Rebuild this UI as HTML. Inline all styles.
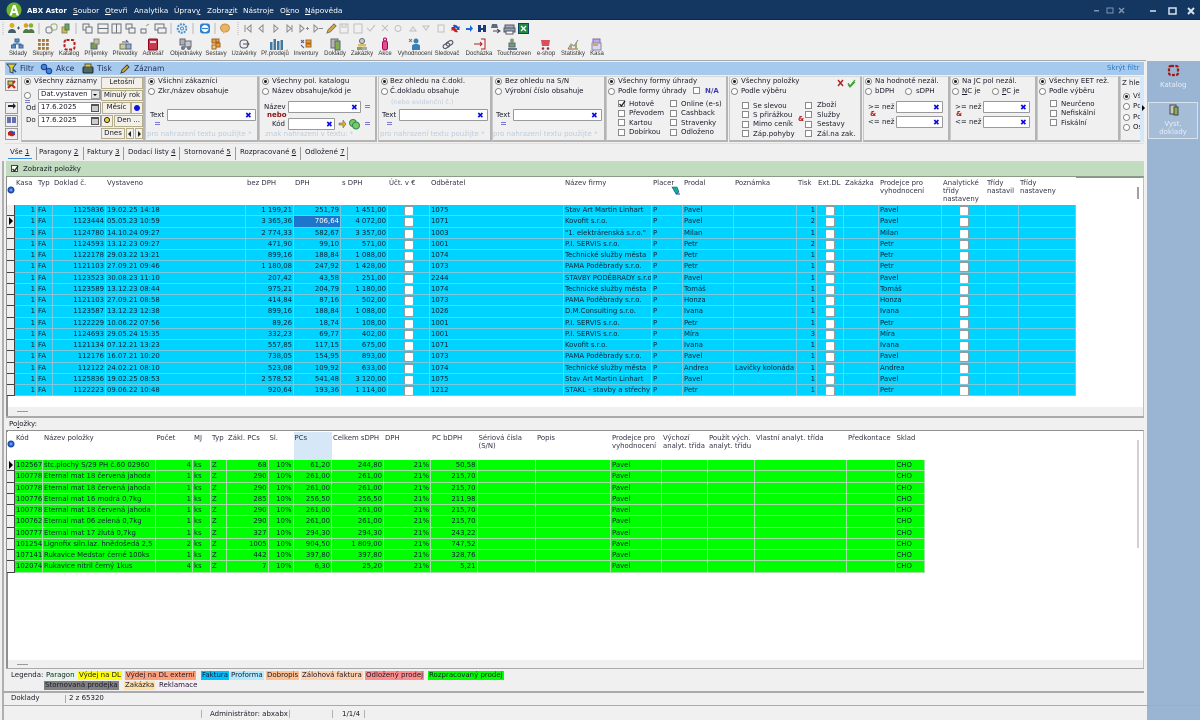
<!DOCTYPE html>
<html lang="cs"><head><meta charset="utf-8"><title>ABX Astor</title>
<style>
*{box-sizing:border-box}
html,body{margin:0;padding:0;width:1200px;height:720px;overflow:hidden;background:#f0f0f0}
body{position:relative;font:7px/9px "DejaVu Sans","Liberation Sans",sans-serif;color:#1a1a2a;filter:blur(.3px)}
.a,.t,.p,.inp,.btn,.rd,.ck,.x,.eq,.hn{position:absolute}
.t{white-space:nowrap}
.l{position:absolute;white-space:nowrap;transform:translateX(-50%);top:50px;font:6px/9px "Liberation Sans",sans-serif;color:#333}
.m{position:absolute;top:6px;color:#fff;font-size:7.4px;line-height:10px;white-space:nowrap}
.p{top:76px;height:66px;border:1px solid #b4b4b4;border-top-color:#d8d8d8;border-left-color:#c8c8c8;border-right-width:2px;border-bottom-width:2px;background:#f0f0f0}
.inp{background:#fff;border:1px solid #9a9a9a;border-radius:1px;padding:0 2px;line-height:9px;white-space:nowrap;overflow:hidden}
.btn{background:#f2f0e8;border:1px solid #b4ad8c;text-align:center;line-height:9px;white-space:nowrap;overflow:hidden}
.rd{width:7px;height:7px;border-radius:50%;background:#fff;border:1px solid #8a8a8a}
.rd.on:after{content:"";position:absolute;left:1px;top:1px;width:3px;height:3px;border-radius:50%;background:#222}
.ck{width:7px;height:7px;background:#fff;border:1px solid #8a8a8a}
.x{color:#0a0ae0;font:bold 8px/9px "DejaVu Sans",sans-serif}
.eq{width:5px;height:3px;border-top:1px solid #7a7ad0;border-bottom:1px solid #7a7ad0}
.hn{color:#bcccdc;white-space:nowrap;top:130px}
u{text-decoration:underline}
.tb{position:absolute;top:148px;white-space:nowrap;font-size:7px}
.sp{position:absolute;top:147px;width:1px;height:13px;background:#9a9a9a}
.g{position:absolute;left:7px;font-size:6.9px;line-height:11px;color:#0a2230}
.r{display:grid;height:11.25px;overflow:hidden}
.r>i{font-style:normal;white-space:nowrap;overflow:hidden;padding:0 1px;border-right:1px solid var(--b);border-bottom:1px solid var(--b);line-height:10px;position:relative}
.r>i:first-child{background:#f0f0f0;border-right:1px solid #444;border-bottom:1px solid #444}
.r>i.c:after{content:"";position:absolute;left:50%;top:1px;width:8px;height:8px;margin-left:-5px;background:#fff;border:1px solid #9a9a9a;border-radius:2px}
.r>i.sel{background:#1b76cc;color:#fff}
.r>i.mk:after{content:"";position:absolute;left:2px;top:1px;border-left:4px solid #000;border-top:4px solid transparent;border-bottom:4px solid transparent}
.h{display:grid;height:28px;background:#fff;color:#334}
.h>i{font-style:normal;padding:2px 1px 0 1px;white-space:nowrap;line-height:8px;overflow:hidden}
#top .r,#top .h{grid-template-columns:8px 22px 16px 53px 140px 48px 47px 47px 42px 134px 88px 31px 51px 63px 20px 27px 35px 63px 44px 33px 57px}
#top .r{background:#00d3ff;--b:#7cc8dc}
#bot .r,#bot .h{grid-template-columns:8px 28px 112.5px 37.5px 18px 16px 41.5px 25px 38.5px 52px 47px 46.5px 58.5px 75px 51px 46px 47px 92px 48.5px 29.5px}
#bot .r{background:#00ff00;--b:#a4dea4}
#top .r>i:nth-child(2),#top .r>i:nth-child(4),#top .r>i:nth-child(6),#top .r>i:nth-child(7),#top .r>i:nth-child(8),#top .r>i:nth-child(15){text-align:right}
#bot .r>i:nth-child(2),#bot .r>i:nth-child(4),#bot .r>i:nth-child(7),#bot .r>i:nth-child(8),#bot .r>i:nth-child(9),#bot .r>i:nth-child(10),#bot .r>i:nth-child(11),#bot .r>i:nth-child(12){text-align:right}
.lg{position:absolute;white-space:nowrap;height:9px;line-height:9px;padding:0 1px;font-size:7px}
</style></head><body>

<!-- title bar -->
<div class="a" style="left:0;top:0;width:1200px;height:20px;background:#133761;border-bottom:1px solid #0d2a4a"></div>
<svg class="a" style="left:0;top:0" width="1200" height="62">
<circle cx="14" cy="10" r="7.5" fill="#6fb52c"/><path d="M9.5 15.5L13 5h2.5l3.5 10.500h-2.500l-.7-2.500h-3.300l-.7 2.500zM12.800 11h2.200L14 7.500z" fill="#fff"/>
<g fill="#7f93ad"><rect x="1094" y="10" width="5" height="1.500"/><rect x="1107" y="8" width="6" height="5" fill="none" stroke="#7f93ad"/><path d="M1119 8l5 5M1124 8l-5 5" stroke="#7f93ad" stroke-width="1.500"/></g>
<g stroke="#d8e2ee" fill="none" stroke-width="1.500"><path d="M1150 11h6"/><rect x="1169" y="8" width="7" height="6"/><path d="M1188 8l6 6M1194 8l-6 6" stroke-width="2"/></g>

<!-- row 1 separators -->
<g stroke="#b8b8b8"><path d="M39 23v11M76 23v11M171 23v11M193 23v11M215 23v11"/><path d="M238 22v13" stroke-dasharray="1 1"/><path d="M3 22v13" stroke-dasharray="1 1"/></g>
<!-- users -->
<circle cx="12" cy="25.500" r="2.500" fill="#d8b020"/><path d="M8 33c0-3 2-4 4-4s4 1 4 4z" fill="#46606a"/><path d="M17 28h3M18.500 26.500v3" stroke="#556"/>
<circle cx="26" cy="25.500" r="2.300" fill="#d8a020"/><circle cx="31" cy="25.500" r="2.300" fill="#8cb030"/><path d="M23 33c0-3 2-4 3.500-4s3 1 3 4zM28 33c0-3 1.500-4 3-4s3.500 1 3.500 4z" fill="#4f7a48"/>
<!-- chains -->
<rect x="46" y="27" width="6" height="6" rx="2" fill="none" stroke="#6a7a7a"/><rect x="51" y="24" width="6" height="6" rx="2" fill="none" stroke="#90a870"/>
<rect x="62" y="27" width="5" height="6" fill="#d8c030" stroke="#887"/><rect x="65" y="24" width="4" height="6" fill="#70a850" stroke="#576"/>
<!-- windows -->
<g fill="none" stroke="#6a7078"><rect x="83" y="24" width="6" height="6"/><rect x="86" y="27" width="6" height="6" fill="#f0f0f0"/><rect x="98" y="24" width="10" height="9"/><path d="M98 28.500h10"/><rect x="112" y="24" width="9" height="9"/><path d="M116.500 24v9"/><rect x="126" y="24" width="6" height="5"/><rect x="129" y="28" width="6" height="5" fill="#f0f0f0"/><rect x="141" y="29" width="5" height="4"/><path d="M146 26l3-2" stroke="#7a6"/><rect x="155" y="24" width="9" height="6"/><rect x="158" y="28" width="8" height="5" fill="#f0f0f0"/></g>
<!-- gear -->
<circle cx="182" cy="28.500" r="4.300" fill="none" stroke="#4d94cf" stroke-width="2" stroke-dasharray="2 1"/><circle cx="182" cy="28.500" r="1.500" fill="none" stroke="#4d94cf"/>
<!-- teamviewer -->
<rect x="200" y="23.500" width="10" height="10" rx="2.500" fill="#2b80d0"/><ellipse cx="205" cy="28.500" rx="3.500" ry="3.500" fill="#fff"/><path d="M202 28.500h6" stroke="#2b80d0" stroke-width="1.200"/>
<!-- bubble -->
<ellipse cx="225" cy="28" rx="4.500" ry="4" fill="#e8b46a" stroke="#c89040"/><path d="M223 31v3l3-2.500" fill="#e8b46a"/>
<!-- nav -->
<g fill="none" stroke="#8a8a8a"><path d="M245 25v7M251 25l-4 3.500 4 3.500z"/><path d="M263 25l-4 3.500 4 3.500z"/><path d="M274 25l4 3.500-4 3.500z"/><path d="M287 25l4 3.500-4 3.500zM292 25v7"/><path d="M300 25l4 3.500-4 3.500zM306 28.500h3M307.500 27v3" /><path d="M314 25l4 3.500-4 3.500zM319 28.500h4"/></g>
<path d="M327 33l1-3 6-6 2 2-6 6z" fill="#e8b030" stroke="#776"/>
<g fill="none" stroke="#c0c0c0"><rect x="340" y="24" width="8" height="9"/><path d="M342 24v3h4v-3"/><rect x="354" y="24" width="8" height="9"/><path d="M367 28l3 3 5-6"/><path d="M382 25l6 6M388 25l-6 6"/><path d="M395 28.500a3 3 0 1 0 6 0a3 3 0 1 0-6 0"/><path d="M410 31l3-4 3 4z"/><path d="M423 26l3 4 3-4z"/><rect x="438" y="25" width="6" height="7"/></g>
<path d="M453 25a4 4 0 0 1 5 2l1.500-1v4h-4l1.500-1a2 2 0 0 0-3-1z" fill="#1558d0"/><path d="M458 32a4 4 0 0 1-5-2l-1.500 1v-4h3" fill="#c02020"/>
<path d="M466 28h4v-3l3 3.500-3 3.500v-2h-4z" fill="#1a6ad8"/>
<path d="M478 25h3v7h-3zM483 25h3v7h-3zM481 28h2v2h-2z" fill="#1a3a80"/>
<path d="M492 24h5l1 4h-7z" fill="#5a6a80"/><path d="M493 31h6M497 29l3 2-3 2" stroke="#445" fill="none"/>
<rect x="505" y="25" width="9" height="4" fill="#aab" stroke="#556"/><rect x="504" y="28" width="11" height="4" fill="#8fa4b8" stroke="#556"/><rect x="506" y="31" width="7" height="3" fill="#fff" stroke="#556"/>
<rect x="518.500" y="23.500" width="10" height="10" fill="#1f8a3e" stroke="#146"/><path d="M521 26l5 5M526 26l-5 5" stroke="#fff" stroke-width="1.300"/>

<!-- row 2 icons -->
<g stroke="#3a6aa0" fill="#5e8dc0"><rect x="15" y="39" width="4" height="3"/><rect x="11.500" y="45" width="4" height="3"/><rect x="19" y="45" width="4" height="3"/><path d="M17 42v2M13.500 45v-1h7.500v1" fill="none"/></g>
<g fill="#a07840"><rect x="38" y="39" width="2.800" height="2.800"/><rect x="42" y="39" width="2.800" height="2.800"/><rect x="46" y="39" width="2.800" height="2.800"/><rect x="38" y="43" width="2.800" height="2.800"/><rect x="42" y="43" width="2.800" height="2.800"/><rect x="46" y="43" width="2.800" height="2.800"/><rect x="38" y="47" width="2.800" height="2.800"/><rect x="42" y="47" width="2.800" height="2.800"/><rect x="46" y="47" width="2.800" height="2.800"/></g>
<rect x="64.500" y="40" width="10" height="9.500" rx="2" fill="none" stroke="#b02020" stroke-width="2" stroke-dasharray="3 1.500"/>
<rect x="91" y="43" width="6" height="6" fill="#7a9a50" stroke="#567"/><rect x="94" y="39" width="5" height="5" fill="#c0c0a0" stroke="#887"/>
<rect x="120" y="44" width="6" height="5" fill="#cc9" stroke="#775"/><rect x="126" y="44" width="5" height="5" fill="#9ad" stroke="#567"/><path d="M122 42h6l-2-2" fill="none" stroke="#557"/>
<rect x="148.500" y="39" width="9" height="11" rx="1" fill="#c83a4a" stroke="#802"/><rect x="150" y="41" width="6" height="2" fill="#f0d0d0"/>
<rect x="180" y="39" width="5" height="6" fill="#a8b0b8" stroke="#667"/><rect x="185" y="41" width="6" height="6" fill="#c8c8c8" stroke="#667"/><circle cx="183" cy="48" r="2" fill="#778"/><circle cx="189" cy="48" r="2" fill="#778"/>
<g stroke="#a06020" fill="#e8a030"><rect x="212" y="39" width="4" height="4"/><rect x="216" y="43" width="4" height="4"/><rect x="212" y="45" width="4" height="4" fill="#f0d080"/><rect x="216" y="39" width="3" height="3" fill="#d0b080"/></g>
<rect x="240" y="40" width="8" height="8" rx="3" fill="none" stroke="#556"/><path d="M243 44h6M247 42l2 2-2 2" fill="none" stroke="#556"/>
<g fill="#44799f"><rect x="270" y="42" width="2.500" height="8"/><rect x="273.500" y="39" width="2.500" height="11"/><rect x="277" y="41" width="2.500" height="9"/><rect x="280.500" y="40" width="2.500" height="10"/></g>
<rect x="306" y="40" width="5" height="3" fill="#e8a030" stroke="#a62"/><rect x="306" y="44" width="5" height="3" fill="#e8a030" stroke="#a62"/><path d="M301 40l3 3M304 40l-3 3M301 45l3 3" stroke="#557"/>
<rect x="331" y="39" width="7" height="9" fill="#b8b8a8" stroke="#667"/><rect x="335" y="41" width="5" height="9" fill="#88aa50" stroke="#567"/>
<circle cx="362" cy="41" r="2.500" fill="#c0c8d0" stroke="#667"/><rect x="358" y="44" width="8" height="2.500" fill="#d8c060"/><rect x="357" y="47" width="5" height="3" fill="#88a060"/><rect x="362" y="47" width="5" height="3" fill="#a8a8b0"/>
<rect x="382.500" y="41" width="5" height="9" rx="2" fill="#e05090" stroke="#a05"/><circle cx="385" cy="39.500" r="1.500" fill="none" stroke="#a05"/>
<circle cx="416" cy="41" r="2.500" fill="#3a80b0"/><path d="M412 50v-4c0-1.500 2-2 4-2s4 .5 4 2v4z" fill="#3a80b0"/><path d="M409 39l3 3M412 39l-3 3" stroke="#777"/>
<g fill="none" stroke="#556" stroke-width="1.200"><rect x="443" y="44" width="7" height="4" rx="2" transform="rotate(-30 446 46)"/><rect x="446" y="41" width="7" height="4" rx="2" transform="rotate(-30 450 43)"/></g>
<path d="M481 39h4v10h-4" fill="none" stroke="#b02020"/><path d="M474 44h8M480 42l2 2-2 2" fill="none" stroke="#b02020"/>
<circle cx="512" cy="40.500" r="2" fill="#8a9a70"/><rect x="509" y="43" width="6" height="4" fill="#7a9a70" stroke="#567"/><path d="M508 49h9" stroke="#678" stroke-width="2"/>
<path d="M541 40h9l-1 6h-7z" fill="#d85060"/><circle cx="543" cy="48.500" r="1.300" fill="#a03040"/><circle cx="548" cy="48.500" r="1.300" fill="#a03040"/>
<path d="M568 49l3-5 3 2 4-6" fill="none" stroke="#8a8a8a"/><path d="M568 49h10" stroke="#a06040"/><rect x="570" y="44" width="2" height="5" fill="#a8a870"/><rect x="575" y="43" width="2" height="6" fill="#a8a870"/>
<rect x="593" y="39" width="7" height="4" fill="#b8b0e0" stroke="#86a"/><rect x="592" y="43" width="9" height="7" fill="#d8d8f0" stroke="#88a"/><rect x="593" y="44" width="5" height="2" fill="#e0a060"/>

<path d="M0 60.500h1146" stroke="#a8a8a8"/>
</svg>
<span class="t" style="left:27px;top:6px;color:#fff;font:bold 7px/10px 'DejaVu Sans',sans-serif">ABX Astor</span>
<span class="m" style="left:73px"><u>S</u>oubor</span><span class="m" style="left:105px"><u>O</u>tevři</span><span class="m" style="left:134px">Analytika</span><span class="m" style="left:174px">Úprav<u>y</u></span><span class="m" style="left:207px">Zobra<u>z</u>it</span><span class="m" style="left:243px">Nástroje</span><span class="m" style="left:280px">O<u>k</u>no</span><span class="m" style="left:305px"><u>N</u>ápověda</span>

<span class="l" style="left:18px">Sklady</span><span class="l" style="left:43px">Skupiny</span><span class="l" style="left:69px">Katalog</span><span class="l" style="left:96px">Příjemky</span><span class="l" style="left:125px">Převodky</span><span class="l" style="left:153px">Adresář</span><span class="l" style="left:186px">Objednávky</span><span class="l" style="left:216px">Sestavy</span><span class="l" style="left:244px">Uzávěrky</span><span class="l" style="left:275px">Př.prodejů</span><span class="l" style="left:306px">Inventury</span><span class="l" style="left:335px">Doklady</span><span class="l" style="left:362px">Zakázky</span><span class="l" style="left:385px">Akce</span><span class="l" style="left:415px">Vyhodnocení</span><span class="l" style="left:447px">Sledovač</span><span class="l" style="left:479px">Docházka</span><span class="l" style="left:514px">Touchscreen</span><span class="l" style="left:546px">e-shop</span><span class="l" style="left:573px">Statistiky</span><span class="l" style="left:597px">Kasa</span>

<!-- right panel -->
<div class="a" style="left:1147px;top:61px;width:53px;height:659px;background:#9ab5d3"></div>
<div class="a" style="left:1148px;top:102px;width:50px;height:37px;background:#a6bdd8;border:1px solid #d8e2ec"></div>
<svg class="a" style="left:1147px;top:62px" width="53" height="60">
<rect x="22" y="4" width="9" height="9" rx="2" fill="none" stroke="#a01818" stroke-width="2.200" stroke-dasharray="3 1.300"/>
<rect x="23" y="43" width="6" height="9" fill="#c8c8b8" stroke="#445"/><rect x="27" y="45" width="4" height="8" fill="#88b040" stroke="#445"/>
</svg>
<span class="t" style="left:1160px;top:81px;color:#e8eef5;font-size:7px">Katalog</span>
<span class="t" style="left:1148px;top:120px;width:50px;color:#e8eef5;font-size:7px;text-align:center;line-height:8px;white-space:normal">Vyst.<br>doklady</span>

<!-- filter bar -->
<div class="a" style="left:5px;top:62px;width:1139px;height:13px;background:#a6c9ee"></div>
<svg class="a" style="left:0;top:62px" width="150" height="14">
<path d="M7 2h9l-3 4v5l-3-1V6z" fill="#e8d020" stroke="#2a4a8a"/><path d="M13 7l3 3" stroke="#2a4a8a" stroke-width="1.500"/>
<circle cx="44" cy="5" r="2.800" fill="#3a88d8" stroke="#1a3a90"/><circle cx="49" cy="9" r="2.800" fill="#3a88d8" stroke="#1a3a90"/>
<rect x="83" y="5" width="10" height="6" rx="1" fill="#4a6a60" stroke="#223"/><rect x="85" y="2" width="6" height="3" fill="#d8c850" stroke="#553"/>
<path d="M121 11l1-3 5-5 2 2-5 5z" fill="#e0b030" stroke="#444"/>
</svg>
<span class="t" style="left:20px;top:64px;font-size:7.5px;color:#203060">Filtr</span><span class="t" style="left:56px;top:64px;font-size:7.5px;color:#203060">Akce</span><span class="t" style="left:97px;top:64px;font-size:7.5px;color:#203060">Tisk</span><span class="t" style="left:134px;top:64px;font-size:7.5px;color:#203060">Záznam</span>
<span class="t" style="left:1107px;top:64px;color:#2778c4">Skrýt filtr</span>

<!-- filter left buttons -->
<div class="btn" style="left:5px;top:78px;width:13px;height:13px;background:#efefef;border-color:#999"></div>
<div class="btn" style="left:5px;top:102px;width:13px;height:12px;background:#efefef;border-color:#999"></div>
<div class="btn" style="left:5px;top:115px;width:13px;height:12px;background:#efefef;border-color:#999"></div>
<div class="btn" style="left:5px;top:128px;width:13px;height:12px;background:#efefef;border-color:#999"></div>
<svg class="a" style="left:5px;top:78px" width="13" height="62">
<path d="M3 3l7 7M10 3l-7 7" stroke="#d01818" stroke-width="2"/><rect x="3" y="3" width="5" height="4" fill="#d8c030" stroke="#554"/>
<path d="M3 27h5v-2l3 3-3 3v-2H3z" fill="#223"/><path d="M3 39v6M5 39v6M8 39v6M10 39v6" stroke="#1a2a90" stroke-width="1.300"/>
<path d="M3 55a3.500 3.500 0 0 1 6-1l1-1v4H6l1-1a2 2 0 0 0-3 0z" fill="#1a50c8"/><path d="M10 56a3.500 3.500 0 0 1-6 1l-1 1v-4h4l-1 1a2 2 0 0 0 3 0z" fill="#c02020"/>
</svg>

<!-- panels -->
<div class="p" style="left:21px;width:124px"></div>
<div class="p" style="left:145px;width:114px"></div>
<div class="p" style="left:259px;width:118px"></div>
<div class="p" style="left:378px;width:114px"></div>
<div class="p" style="left:492px;width:114px"></div>
<div class="p" style="left:606px;width:122px"></div>
<div class="p" style="left:729px;width:133px"></div>
<div class="p" style="left:863px;width:87px"></div>
<div class="p" style="left:950px;width:87px"></div>
<div class="p" style="left:1037px;width:83px"></div>
<div class="p" style="left:1120px;width:22px"></div>
<div class="a" style="left:1140px;top:76px;width:4px;height:66px;background:#d3e8fb"></div>

<!-- P0 -->
<i class="rd on" style="left:24px;top:78px"></i><span class="t" style="left:34px;top:77px">Všechny záznamy</span>
<div class="btn" style="left:101px;top:77px;width:42px;height:12px">Letošní</div>
<i class="rd" style="left:24px;top:92px"></i><i class="eq" style="left:25px;top:100px"></i>
<div class="inp" style="left:38px;top:89px;width:63px;height:11px;line-height:9px">Dat.vystaven</div>
<div class="a" style="left:91px;top:90px;width:9px;height:9px;background:#e4e4e4;border:1px solid #999"></div><div class="a" style="left:93px;top:94px;border-left:2px solid transparent;border-right:2px solid transparent;border-top:2px solid #000"></div>
<div class="btn" style="left:101px;top:90px;width:42px;height:11px">Minulý rok</div>
<span class="t" style="left:26px;top:104px">Od</span><div class="inp" style="left:38px;top:102px;width:63px;height:12px">17.6.2025</div><div class="a" style="left:91px;top:104px;width:8px;height:8px;background:#ccc;border:1px solid #555;border-top-width:2px"></div>
<div class="btn" style="left:102px;top:102px;width:29px;height:12px">Měsíc</div><div class="btn" style="left:131px;top:102px;width:12px;height:12px"></div><div class="a" style="left:134px;top:105px;width:6px;height:6px;border-radius:50%;background:#1010e0"></div>
<span class="t" style="left:26px;top:116px">Do</span><div class="inp" style="left:38px;top:115px;width:63px;height:12px">17.6.2025</div><div class="a" style="left:91px;top:117px;width:8px;height:8px;background:#ccc;border:1px solid #555;border-top-width:2px"></div>
<div class="btn" style="left:101px;top:115px;width:12px;height:12px"></div><div class="a" style="left:104px;top:117px;width:6px;height:6px;border-radius:50%;background:#f0d030;border:1px solid #222"></div>
<div class="btn" style="left:114px;top:115px;width:29px;height:12px">Den ...</div>
<div class="btn" style="left:101px;top:128px;width:24px;height:11px">Dnes</div><div class="btn" style="left:126px;top:128px;width:8px;height:11px"></div><div class="btn" style="left:135px;top:128px;width:8px;height:11px"></div>
<div class="a" style="left:128px;top:131px;border-right:3px solid #222;border-top:3px solid transparent;border-bottom:3px solid transparent"></div><div class="a" style="left:138px;top:131px;border-left:3px solid #222;border-top:3px solid transparent;border-bottom:3px solid transparent"></div>

<!-- P1 -->
<i class="rd on" style="left:148px;top:78px"></i><span class="t" style="left:158px;top:77px">Všichni zákazníci</span>
<i class="rd" style="left:148px;top:88px"></i><span class="t" style="left:158px;top:87px">Zkr./název obsahuje</span>
<span class="t" style="left:150px;top:111px">Text</span><i class="eq" style="left:155px;top:122px"></i>
<div class="inp" style="left:167px;top:109px;width:89px;height:12px"></div><b class="x" style="left:245px;top:111px">✖</b>
<span class="hn" style="left:147px;top:130px">pro nahrazení textu použijte *</span>

<!-- P2 -->
<i class="rd on" style="left:262px;top:78px"></i><span class="t" style="left:272px;top:77px">Všechny pol. katalogu</span>
<i class="rd" style="left:262px;top:88px"></i><span class="t" style="left:272px;top:87px">Název obsahuje/kód je</span>
<span class="t" style="left:264px;top:103px">Název</span><div class="inp" style="left:288px;top:101px;width:73px;height:12px"></div><b class="x" style="left:351px;top:103px">✖</b><i class="eq" style="left:365px;top:105px"></i>
<span class="t" style="left:267px;top:111px;color:#8a1010;font-weight:bold">nebo</span>
<span class="t" style="left:272px;top:120px">Kód</span><div class="inp" style="left:288px;top:118px;width:47px;height:12px"></div><b class="x" style="left:326px;top:120px">✖</b>
<svg class="a" style="left:338px;top:118px" width="24" height="12"><path d="M1 5h4V2l3 4-3 4V7H1z" fill="#e8b020" stroke="#554" stroke-width=".5"/><circle cx="15" cy="5" r="3.500" fill="#7ec860" stroke="#2a8a5a"/><circle cx="18" cy="7.500" r="3.500" fill="#7ec860" stroke="#2a8a5a"/></svg>
<i class="eq" style="left:365px;top:122px"></i>
<span class="hn" style="left:265px;top:130px">znak nahrazení v textu: *</span>

<!-- P3 -->
<i class="rd on" style="left:381px;top:78px"></i><span class="t" style="left:390px;top:77px">Bez ohledu na č.dokl.</span>
<i class="rd" style="left:381px;top:88px"></i><span class="t" style="left:390px;top:87px">Č.dokladu obsahuje</span>
<span class="hn" style="left:391px;top:98px;font-size:6.500px">(nebo evidenční č.)</span>
<span class="t" style="left:382px;top:111px">Text</span><i class="eq" style="left:387px;top:122px"></i>
<div class="inp" style="left:399px;top:109px;width:89px;height:12px"></div><b class="x" style="left:477px;top:111px">✖</b>
<span class="hn" style="left:380px;top:130px">pro nahrazení textu použijte *</span>

<!-- P4 -->
<i class="rd on" style="left:495px;top:78px"></i><span class="t" style="left:505px;top:77px">Bez ohledu na S/N</span>
<i class="rd" style="left:495px;top:88px"></i><span class="t" style="left:505px;top:87px">Výrobní číslo obsahuje</span>
<span class="t" style="left:496px;top:111px">Text</span><i class="eq" style="left:501px;top:122px"></i>
<div class="inp" style="left:513px;top:109px;width:89px;height:12px"></div><b class="x" style="left:591px;top:111px">✖</b>
<span class="hn" style="left:493px;top:130px">pro nahrazení textu použijte *</span>

<!-- P5 -->
<i class="rd on" style="left:608px;top:78px"></i><span class="t" style="left:618px;top:77px">Všechny formy úhrady</span>
<i class="rd" style="left:608px;top:88px"></i><span class="t" style="left:618px;top:87px">Podle formy úhrady</span>
<i class="ck" style="left:693px;top:87px"></i><span class="t" style="left:705px;top:87px;color:#4040b0;font-weight:bold">N/A</span>
<i class="ck" style="left:618px;top:100px"></i><span class="t" style="left:629px;top:100px">Hotově</span>
<svg class="a" style="left:618px;top:100px" width="8" height="8"><path d="M1.500 4l2 2 3.500-5" fill="none" stroke="#222" stroke-width="1.300"/></svg>
<i class="ck" style="left:618px;top:110px"></i><span class="t" style="left:629px;top:109px">Převodem</span>
<i class="ck" style="left:618px;top:119px"></i><span class="t" style="left:629px;top:119px">Kartou</span>
<i class="ck" style="left:618px;top:129px"></i><span class="t" style="left:629px;top:128px">Dobírkou</span>
<i class="ck" style="left:670px;top:100px"></i><span class="t" style="left:681px;top:100px">Online (e-s)</span>
<i class="ck" style="left:670px;top:110px"></i><span class="t" style="left:681px;top:109px">Cashback</span>
<i class="ck" style="left:670px;top:119px"></i><span class="t" style="left:681px;top:119px">Stravenky</span>
<i class="ck" style="left:670px;top:129px"></i><span class="t" style="left:681px;top:128px">Odloženo</span>

<!-- P6 -->
<i class="rd on" style="left:731px;top:78px"></i><span class="t" style="left:741px;top:77px">Všechny položky</span>
<i class="rd" style="left:731px;top:88px"></i><span class="t" style="left:741px;top:87px">Podle výběru</span>
<i class="ck" style="left:742px;top:102px"></i><span class="t" style="left:753px;top:102px">Se slevou</span>
<i class="ck" style="left:742px;top:111px"></i><span class="t" style="left:753px;top:111px">S přirážkou</span>
<i class="ck" style="left:742px;top:121px"></i><span class="t" style="left:753px;top:120px">Mimo ceník</span>
<i class="ck" style="left:742px;top:130px"></i><span class="t" style="left:753px;top:130px">Záp.pohyby</span>
<span class="t" style="left:798px;top:115px;color:#b01818;font-weight:bold">&amp;</span>
<i class="ck" style="left:805px;top:102px"></i><span class="t" style="left:817px;top:101px">Zboží</span>
<i class="ck" style="left:805px;top:111px"></i><span class="t" style="left:817px;top:111px">Služby</span>
<i class="ck" style="left:805px;top:121px"></i><span class="t" style="left:817px;top:120px">Sestavy</span>
<i class="ck" style="left:805px;top:130px"></i><span class="t" style="left:817px;top:130px">Zál.na zak.</span>
<svg class="a" style="left:837px;top:79px" width="20" height="9"><path d="M1 1l5 6M6 1L1 7" stroke="#b02020" stroke-width="1.400"/><path d="M11 4l2 3 5-6M11 5.500l2 2.500 5-5" fill="none" stroke="#3aa030" stroke-width="1.100"/></svg>

<!-- P7 -->
<i class="rd on" style="left:865px;top:78px"></i><span class="t" style="left:875px;top:77px">Na hodnotě nezál.</span>
<i class="rd" style="left:865px;top:88px"></i><span class="t" style="left:875px;top:87px">bDPH</span>
<i class="rd" style="left:905px;top:88px"></i><span class="t" style="left:916px;top:87px">sDPH</span>
<span class="t" style="left:868px;top:103px">&gt;= než</span><div class="inp" style="left:896px;top:101px;width:47px;height:12px"></div><b class="x" style="left:933px;top:103px">✖</b>
<span class="t" style="left:870px;top:110px;color:#b01818;font-weight:bold">&amp;</span>
<span class="t" style="left:868px;top:118px">&lt;= než</span><div class="inp" style="left:896px;top:116px;width:47px;height:12px"></div><b class="x" style="left:933px;top:118px">✖</b>

<!-- P8 -->
<i class="rd on" style="left:952px;top:78px"></i><span class="t" style="left:962px;top:77px">Na JC pol nezál.</span>
<i class="rd" style="left:952px;top:88px"></i><span class="t" style="left:962px;top:87px"><u>N</u>C je</span>
<i class="rd" style="left:992px;top:88px"></i><span class="t" style="left:1002px;top:87px"><u>P</u>C je</span>
<span class="t" style="left:955px;top:103px">&gt;= než</span><div class="inp" style="left:983px;top:101px;width:47px;height:12px"></div><b class="x" style="left:1020px;top:103px">✖</b>
<span class="t" style="left:956px;top:110px;color:#b01818;font-weight:bold">&amp;</span>
<span class="t" style="left:955px;top:118px">&lt;= než</span><div class="inp" style="left:983px;top:116px;width:47px;height:12px"></div><b class="x" style="left:1020px;top:118px">✖</b>

<!-- P9 -->
<i class="rd on" style="left:1039px;top:78px"></i><span class="t" style="left:1049px;top:77px">Všechny EET rež.</span>
<i class="rd" style="left:1039px;top:88px"></i><span class="t" style="left:1049px;top:87px">Podle výběru</span>
<i class="ck" style="left:1050px;top:100px"></i><span class="t" style="left:1061px;top:100px">Neurčeno</span>
<i class="ck" style="left:1050px;top:110px"></i><span class="t" style="left:1061px;top:109px">Nefiskální</span>
<i class="ck" style="left:1050px;top:119px"></i><span class="t" style="left:1061px;top:119px">Fiskální</span>

<!-- P10 -->
<span class="t" style="left:1122px;top:79px">Z hle</span>
<i class="rd on" style="left:1123px;top:93px"></i><span class="t" style="left:1133px;top:92px;width:7px;overflow:hidden">Vš</span>
<i class="rd" style="left:1123px;top:103px"></i><span class="t" style="left:1133px;top:102px;width:7px;overflow:hidden">Pc</span>
<i class="rd" style="left:1123px;top:114px"></i><span class="t" style="left:1133px;top:113px;width:7px;overflow:hidden">Pc</span>
<i class="rd" style="left:1123px;top:124px"></i><span class="t" style="left:1133px;top:123px;width:7px;overflow:hidden">Os</span>
<div class="a" style="left:1142px;top:105px;border-left:3px solid #000;border-top:3px solid transparent;border-bottom:3px solid transparent"></div>

<!-- tabs -->
<div class="a" style="left:5px;top:143px;width:1139px;height:1px;background:#e0e0e0"></div>
<span class="tb" style="left:10px">Vše <u>1</u></span><div class="a" style="left:8px;top:158px;width:24px;height:1px;background:#3a90e0"></div>
<span class="tb" style="left:39px">Paragony <u>2</u></span><span class="tb" style="left:87px">Faktury <u>3</u></span><span class="tb" style="left:128px">Dodací listy <u>4</u></span><span class="tb" style="left:184px">Stornované <u>5</u></span><span class="tb" style="left:240px">Rozpracované <u>6</u></span><span class="tb" style="left:305px">Odložené <u>7</u></span>
<i class="sp" style="left:36px"></i><i class="sp" style="left:83px"></i><i class="sp" style="left:123px"></i><i class="sp" style="left:179px"></i><i class="sp" style="left:235px"></i><i class="sp" style="left:300px"></i><i class="sp" style="left:347px"></i>

<!-- outer frame -->
<div class="a" style="left:2px;top:161px;width:2px;height:559px;background:#b0b0b0"></div>
<div class="a" style="left:6px;top:161px;width:1138px;height:16px;background:#c2dcc0;border-bottom:1px solid #8a9a88"></div>
<i class="ck" style="left:11px;top:165px;border-color:#444"></i>
<svg class="a" style="left:11px;top:165px" width="8" height="8"><path d="M1.500 4l2 2 3.500-5" fill="none" stroke="#222" stroke-width="1.300"/></svg>
<span class="t" style="left:23px;top:165px">Zobrazit položky</span>

<!-- top grid -->
<div class="a" style="left:6px;top:177px;width:1138px;height:240px;background:#fff;border:1px solid #909090;border-right-color:#c0c0c0;border-left-width:2px;border-bottom:0"></div>
<div class="a" style="left:8px;top:407px;width:1135px;height:9px;background:#f0f0f0"></div>
<div class="a" style="left:17px;top:411px;width:11px;height:1px;background:#9a9a9a"></div>
<div class="a" style="left:6px;top:416px;width:1138px;height:2px;background:#aaa"></div>
<div class="a" style="left:1137px;top:187px;width:2px;height:12px;background:#a0a0a0"></div>

<div class="g" id="top" style="top:177px;width:1069px">
<div class="h"><i></i><i>Kasa</i><i>Typ</i><i>Doklad č.</i><i>Vystaveno</i><i>bez DPH</i><i>DPH</i><i>s DPH</i><i>Účt. v €</i><i>Odběratel</i><i>Název firmy</i><i>Placer</i><i>Prodal</i><i>Poznámka</i><i>Tisk</i><i>Ext.DL</i><i>Zakázka</i><i>Prodejce pro<br>vyhodnocení</i><i>Analytické<br>třídy<br>nastaveny</i><i>Třídy<br>nastavil</i><i>Třídy<br>nastaveny</i></div>
<div class="r"><i></i><i>1</i><i>FA</i><i>1125836</i><i>19.02.25 14:18</i><i>1 199,21</i><i>251,79</i><i>1 451,00</i><i class="c"></i><i>1075</i><i>Stav Art Martin Linhart</i><i>P</i><i>Pavel</i><i></i><i>1</i><i class="c"></i><i></i><i>Pavel</i><i class="c"></i><i></i><i></i></div>
<div class="r"><i class="mk"></i><i>1</i><i>FA</i><i>1123444</i><i>05.05.23 10:59</i><i>3 365,36</i><i class="sel">706,64</i><i>4 072,00</i><i class="c"></i><i>1071</i><i>Kovofit s.r.o.</i><i>P</i><i>Pavel</i><i></i><i>2</i><i class="c"></i><i></i><i>Pavel</i><i class="c"></i><i></i><i></i></div>
<div class="r"><i></i><i>1</i><i>FA</i><i>1124780</i><i>14.10.24 09:27</i><i>2 774,33</i><i>582,67</i><i>3 357,00</i><i class="c"></i><i>1003</i><i>"1. elektrárenská s.r.o."</i><i>P</i><i>Milan</i><i></i><i>1</i><i class="c"></i><i></i><i>Milan</i><i class="c"></i><i></i><i></i></div>
<div class="r"><i></i><i>1</i><i>FA</i><i>1124593</i><i>13.12.23 09:27</i><i>471,90</i><i>99,10</i><i>571,00</i><i class="c"></i><i>1001</i><i>P.I. SERVIS s.r.o.</i><i>P</i><i>Petr</i><i></i><i>2</i><i class="c"></i><i></i><i>Petr</i><i class="c"></i><i></i><i></i></div>
<div class="r"><i></i><i>1</i><i>FA</i><i>1122178</i><i>29.03.22 13:21</i><i>899,16</i><i>188,84</i><i>1 088,00</i><i class="c"></i><i>1074</i><i>Technické služby města</i><i>P</i><i>Petr</i><i></i><i>1</i><i class="c"></i><i></i><i>Petr</i><i class="c"></i><i></i><i></i></div>
<div class="r"><i></i><i>1</i><i>FA</i><i>1121103</i><i>27.09.21 09:46</i><i>1 180,08</i><i>247,92</i><i>1 428,00</i><i class="c"></i><i>1073</i><i>PAMA Poděbrady s.r.o.</i><i>P</i><i>Petr</i><i></i><i>1</i><i class="c"></i><i></i><i>Petr</i><i class="c"></i><i></i><i></i></div>
<div class="r"><i></i><i>1</i><i>FA</i><i>1123523</i><i>30.08.23 11:10</i><i>207,42</i><i>43,58</i><i>251,00</i><i class="c"></i><i>2244</i><i>STAVBY PODĚBRADY s.r.o.</i><i>P</i><i>Pavel</i><i></i><i>1</i><i class="c"></i><i></i><i>Pavel</i><i class="c"></i><i></i><i></i></div>
<div class="r"><i></i><i>1</i><i>FA</i><i>1123589</i><i>13.12.23 08:44</i><i>975,21</i><i>204,79</i><i>1 180,00</i><i class="c"></i><i>1074</i><i>Technické služby města</i><i>P</i><i>Tomáš</i><i></i><i>1</i><i class="c"></i><i></i><i>Tomáš</i><i class="c"></i><i></i><i></i></div>
<div class="r"><i></i><i>1</i><i>FA</i><i>1121103</i><i>27.09.21 08:58</i><i>414,84</i><i>87,16</i><i>502,00</i><i class="c"></i><i>1073</i><i>PAMA Poděbrady s.r.o.</i><i>P</i><i>Honza</i><i></i><i>1</i><i class="c"></i><i></i><i>Honza</i><i class="c"></i><i></i><i></i></div>
<div class="r"><i></i><i>1</i><i>FA</i><i>1123587</i><i>13.12.23 12:38</i><i>899,16</i><i>188,84</i><i>1 088,00</i><i class="c"></i><i>1026</i><i>D.M.Consulting s.r.o.</i><i>P</i><i>Ivana</i><i></i><i>1</i><i class="c"></i><i></i><i>Ivana</i><i class="c"></i><i></i><i></i></div>
<div class="r"><i></i><i>1</i><i>FA</i><i>1122229</i><i>10.06.22 07:56</i><i>89,26</i><i>18,74</i><i>108,00</i><i class="c"></i><i>1001</i><i>P.I. SERVIS s.r.o.</i><i>P</i><i>Petr</i><i></i><i>1</i><i class="c"></i><i></i><i>Petr</i><i class="c"></i><i></i><i></i></div>
<div class="r"><i></i><i>1</i><i>FA</i><i>1124693</i><i>29.05.24 15:35</i><i>332,23</i><i>69,77</i><i>402,00</i><i class="c"></i><i>1001</i><i>P.I. SERVIS s.r.o.</i><i>P</i><i>Míra</i><i></i><i>3</i><i class="c"></i><i></i><i>Míra</i><i class="c"></i><i></i><i></i></div>
<div class="r"><i></i><i>1</i><i>FA</i><i>1121134</i><i>07.12.21 13:23</i><i>557,85</i><i>117,15</i><i>675,00</i><i class="c"></i><i>1071</i><i>Kovofit s.r.o.</i><i>P</i><i>Ivana</i><i></i><i>1</i><i class="c"></i><i></i><i>Ivana</i><i class="c"></i><i></i><i></i></div>
<div class="r"><i></i><i>1</i><i>FA</i><i>112176</i><i>16.07.21 10:20</i><i>738,05</i><i>154,95</i><i>893,00</i><i class="c"></i><i>1073</i><i>PAMA Poděbrady s.r.o.</i><i>P</i><i>Pavel</i><i></i><i>1</i><i class="c"></i><i></i><i>Pavel</i><i class="c"></i><i></i><i></i></div>
<div class="r"><i></i><i>1</i><i>FA</i><i>112122</i><i>24.02.21 08:10</i><i>523,08</i><i>109,92</i><i>633,00</i><i class="c"></i><i>1074</i><i>Technické služby města</i><i>P</i><i>Andrea</i><i>Lavičky kolonáda</i><i>1</i><i class="c"></i><i></i><i>Andrea</i><i class="c"></i><i></i><i></i></div>
<div class="r"><i></i><i>1</i><i>FA</i><i>1125836</i><i>19.02.25 08:53</i><i>2 578,52</i><i>541,48</i><i>3 120,00</i><i class="c"></i><i>1075</i><i>Stav Art Martin Linhart</i><i>P</i><i>Pavel</i><i></i><i>1</i><i class="c"></i><i></i><i>Pavel</i><i class="c"></i><i></i><i></i></div>
<div class="r"><i></i><i>1</i><i>FA</i><i>1122223</i><i>09.06.22 10:48</i><i>920,64</i><i>193,36</i><i>1 114,00</i><i class="c"></i><i>1212</i><i>STAKL - stavby a střechy</i><i>P</i><i>Petr</i><i></i><i>1</i><i class="c"></i><i></i><i>Petr</i><i class="c"></i><i></i><i></i></div>
</div>
<svg class="a" style="left:7px;top:186px" width="8" height="8"><circle cx="4" cy="4" r="3" fill="#2a70e0" stroke="#123a90"/><circle cx="4" cy="4" r="1" fill="#9ad"/></svg>
<svg class="a" style="left:671px;top:186px" width="10" height="9"><path d="M1 1l5 0 2 5-3 2z" fill="#18a8a0" stroke="#0a5a70" stroke-width=".6"/><path d="M5 8h4" stroke="#1a3ab0"/></svg>

<!-- polozky label -->
<span class="t" style="left:9px;top:420px">Po<u>l</u>ožky:</span>

<!-- lower grid -->
<div class="a" style="left:6px;top:430px;width:1138px;height:239px;background:#fff;border:1px solid #909090;border-right-color:#c0c0c0;border-left-width:2px;border-bottom:0"></div>
<div class="a" style="left:8px;top:660px;width:1135px;height:8px;background:#f0f0f0"></div>
<div class="a" style="left:17px;top:664px;width:11px;height:1px;background:#9a9a9a"></div>
<div class="a" style="left:6px;top:668px;width:1138px;height:1px;background:#aaa"></div>
<div class="a" style="left:1137px;top:440px;width:2px;height:108px;background:#d0d0d0"></div>
<div class="a" style="left:293.500px;top:432px;width:38.500px;height:28px;background:#d6e8f8"></div>
<div class="a" style="left:7px;top:432px;width:8px;height:28px;background:#fff"></div>

<div class="g" id="bot" style="top:432px;width:918px">
<div class="h" style="background:transparent"><i></i><i>Kód</i><i>Název položky</i><i>Počet</i><i>MJ</i><i>Typ</i><i>Zákl. PCs</i><i>Sl.</i><i>PCs</i><i>Celkem sDPH</i><i>DPH</i><i>PC bDPH</i><i>Sériová čísla<br>(S/N)</i><i>Popis</i><i>Prodejce pro<br>vyhodnocení</i><i>Výchozí<br>analyt. třída</i><i>Použít vých.<br>analyt. třídu</i><i>Vlastní analyt. třída</i><i>Předkontace</i><i>Sklad</i></div>
<div class="r"><i class="mk"></i><i>102567</i><i>štc.plochý S/29 PH č.60 02960</i><i>4</i><i>ks</i><i>Z</i><i>68</i><i>10%</i><i>61,20</i><i>244,80</i><i>21%</i><i>50,58</i><i></i><i></i><i>Pavel</i><i></i><i></i><i></i><i></i><i>CHO</i></div>
<div class="r"><i></i><i>100778</i><i>Eternal mat 18 červená jahoda</i><i>1</i><i>ks</i><i>Z</i><i>290</i><i>10%</i><i>261,00</i><i>261,00</i><i>21%</i><i>215,70</i><i></i><i></i><i>Pavel</i><i></i><i></i><i></i><i></i><i>CHO</i></div>
<div class="r"><i></i><i>100778</i><i>Eternal mat 18 červená jahoda</i><i>1</i><i>ks</i><i>Z</i><i>290</i><i>10%</i><i>261,00</i><i>261,00</i><i>21%</i><i>215,70</i><i></i><i></i><i>Pavel</i><i></i><i></i><i></i><i></i><i>CHO</i></div>
<div class="r"><i></i><i>100776</i><i>Eternal mat 16 modrá 0,7kg</i><i>1</i><i>ks</i><i>Z</i><i>285</i><i>10%</i><i>256,50</i><i>256,50</i><i>21%</i><i>211,98</i><i></i><i></i><i>Pavel</i><i></i><i></i><i></i><i></i><i>CHO</i></div>
<div class="r"><i></i><i>100778</i><i>Eternal mat 18 červená jahoda</i><i>1</i><i>ks</i><i>Z</i><i>290</i><i>10%</i><i>261,00</i><i>261,00</i><i>21%</i><i>215,70</i><i></i><i></i><i>Pavel</i><i></i><i></i><i></i><i></i><i>CHO</i></div>
<div class="r"><i></i><i>100762</i><i>Eternal mat 06 zelená 0,7kg</i><i>1</i><i>ks</i><i>Z</i><i>290</i><i>10%</i><i>261,00</i><i>261,00</i><i>21%</i><i>215,70</i><i></i><i></i><i>Pavel</i><i></i><i></i><i></i><i></i><i>CHO</i></div>
<div class="r"><i></i><i>100777</i><i>Eternal mat 17 žlutá 0,7kg</i><i>1</i><i>ks</i><i>Z</i><i>327</i><i>10%</i><i>294,30</i><i>294,30</i><i>21%</i><i>243,22</i><i></i><i></i><i>Pavel</i><i></i><i></i><i></i><i></i><i>CHO</i></div>
<div class="r"><i></i><i>101254</i><i>Lignofix siln.laz. hnědošedá 2,5</i><i>2</i><i>ks</i><i>Z</i><i>1005</i><i>10%</i><i>904,50</i><i>1 809,00</i><i>21%</i><i>747,52</i><i></i><i></i><i>Pavel</i><i></i><i></i><i></i><i></i><i>CHO</i></div>
<div class="r"><i></i><i>107141</i><i>Rukavice Medstar černé 100ks</i><i>1</i><i>ks</i><i>Z</i><i>442</i><i>10%</i><i>397,80</i><i>397,80</i><i>21%</i><i>328,76</i><i></i><i></i><i>Pavel</i><i></i><i></i><i></i><i></i><i>CHO</i></div>
<div class="r"><i></i><i>102074</i><i>Rukavice nitril černý 1kus</i><i>4</i><i>ks</i><i>Z</i><i>7</i><i>10%</i><i>6,30</i><i>25,20</i><i>21%</i><i>5,21</i><i></i><i></i><i>Pavel</i><i></i><i></i><i></i><i></i><i>CHO</i></div>
</div>
<svg class="a" style="left:7px;top:440px" width="8" height="8"><circle cx="4" cy="4" r="3" fill="#2a70e0" stroke="#123a90"/><circle cx="4" cy="4" r="1" fill="#9ad"/></svg>

<!-- legend -->
<span class="t" style="left:11px;top:671px">Legenda:</span>
<span class="lg" style="left:45px;top:671px;background:#e2f6e6">Paragon</span>
<span class="lg" style="left:78px;top:671px;background:#ffff00">Výdej na DL</span>
<span class="lg" style="left:125px;top:671px;background:#ffa07a">Výdej na DL externí</span>
<span class="lg" style="left:201px;top:671px;background:#00c0ff">Faktura</span>
<span class="lg" style="left:230px;top:671px;background:#b4eaff">Proforma</span>
<span class="lg" style="left:266px;top:671px;background:#ffc090">Dobropis</span>
<span class="lg" style="left:301px;top:671px;background:#ffd2b0">Zálohová faktura</span>
<span class="lg" style="left:365px;top:671px;background:#ff8c8c">Odložený prodej</span>
<span class="lg" style="left:428px;top:671px;background:#00ff00">Rozpracovaný prodej</span>
<span class="lg" style="left:44px;top:681px;background:#808080">Stornovaná prodejka</span>
<span class="lg" style="left:124px;top:681px;background:#ffe0a8">Zakázka</span>
<span class="lg" style="left:158px;top:681px;background:#f8ecf8">Reklamace</span>

<!-- status -->
<div class="a" style="left:2px;top:691px;width:1142px;height:2px;background:#aaa"></div>
<div class="a" style="left:65px;top:695px;width:1px;height:8px;background:#aaa"></div>
<span class="t" style="left:11px;top:694px">Doklady</span><span class="t" style="left:69px;top:694px">2 z 65320</span>
<div class="a" style="left:2px;top:705px;width:1198px;height:1px;background:#aaa"></div>
<i class="a" style="left:201px;top:710px;width:1px;height:8px;background:#b0b0b0"></i><i class="a" style="left:289px;top:710px;width:1px;height:8px;background:#b0b0b0"></i><i class="a" style="left:332px;top:710px;width:1px;height:8px;background:#b0b0b0"></i><i class="a" style="left:364px;top:710px;width:1px;height:8px;background:#b0b0b0"></i>
<span class="t" style="left:210px;top:710px">Administrátor: abxabx</span><span class="t" style="left:342px;top:710px">1/1/4</span>
</body></html>
